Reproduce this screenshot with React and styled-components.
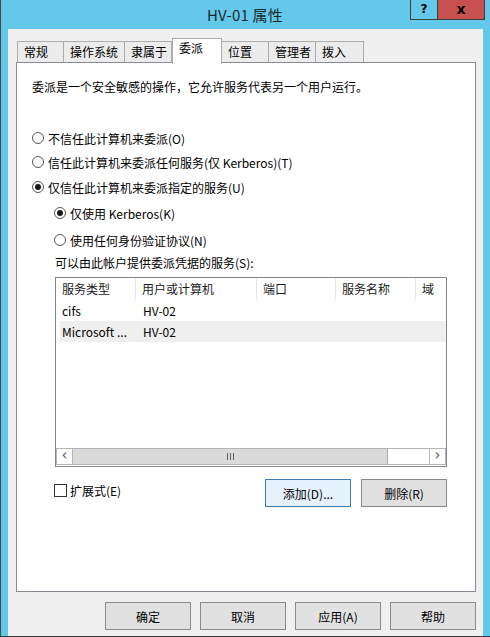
import React from "react";
import styled, { createGlobalStyle } from "styled-components";

const GlobalStyle = createGlobalStyle`
  html, body {
    margin: 0;
    padding: 0;
    background: #64c8ea;
  }
  body {
    font-family: "Noto Sans CJK SC", "Microsoft YaHei", sans-serif;
    font-size: 12px;
    color: #000;
  }
`;

const tabs = [
  { label: "常规", width: 47 },
  { label: "操作系统", width: 61 },
  { label: "隶属于", width: 47 },
  { label: "委派", width: 50, active: true },
  { label: "位置", width: 47 },
  { label: "管理者", width: 47 },
  { label: "拨入", width: 48 },
];

const columns = [
  { label: "服务类型", width: 80 },
  { label: "用户或计算机", width: 121 },
  { label: "端口", width: 79 },
  { label: "服务名称", width: 80 },
  { label: "域", width: 40 },
];

const rows = [
  { type: "cifs", host: "HV-02" },
  { type: "Microsoft ...", host: "HV-02", selected: true },
];

export default function App() {
  return (
    <>
      <GlobalStyle />
      <Window>
        <TitleBar>
          <span />
          <Title>HV-01 属性</Title>
          <Caption>
            <CaptionButton>?</CaptionButton>
            <CaptionButton close>x</CaptionButton>
          </Caption>
        </TitleBar>
        <Client>
          <TabStrip>
            {tabs.map((t) => (
              <Tab key={t.label} $w={t.width} $active={t.active}>
                {t.label}
              </Tab>
            ))}
          </TabStrip>
          <Panel>
            <Description>委派是一个安全敏感的操作，它允许服务代表另一个用户运行。</Description>

            <Option $top={31}>
              <Radio />
              不信任此计算机来委派(O)
            </Option>
            <Option $top={4}>
              <Radio />
              信任此计算机来委派任何服务(仅 Kerberos)(T)
            </Option>
            <Option $top={5}>
              <Radio $checked />
              仅信任此计算机来委派指定的服务(U)
            </Option>
            <Option $top={6} $indent={22}>
              <Radio $checked />
              仅使用 Kerberos(K)
            </Option>
            <Option $top={7} $indent={22}>
              <Radio />
              使用任何身份验证协议(N)
            </Option>

            <ListLabel>可以由此帐户提供委派凭据的服务(S):</ListLabel>

            <ListBox>
              <ListHeader>
                {columns.map((c) => (
                  <HeaderCell key={c.label} $w={c.width}>
                    {c.label}
                  </HeaderCell>
                ))}
              </ListHeader>
              <Rows>
                {rows.map((r) => (
                  <Row key={r.type} $selected={r.selected}>
                    <Cell $w={76}>{r.type}</Cell>
                    <Cell $w={121} $pad={7}>
                      {r.host}
                    </Cell>
                  </Row>
                ))}
              </Rows>
              <ScrollBar>
                <ScrollArrow>&lsaquo;</ScrollArrow>
                <Thumb>
                  <Grip />
                </Thumb>
                <Track />
                <ScrollArrow $right>&rsaquo;</ScrollArrow>
              </ScrollBar>
            </ListBox>

            <ActionRow>
              <CheckLabel>
                <CheckBox />
                扩展式(E)
              </CheckLabel>
              <ActionButtons>
                <Button $default>添加(D)...</Button>
                <Button>删除(R)</Button>
              </ActionButtons>
            </ActionRow>
          </Panel>
          <DialogButtons>
            <Button>确定</Button>
            <Button>取消</Button>
            <Button>应用(A)</Button>
            <Button>帮助</Button>
          </DialogButtons>
        </Client>
      </Window>
    </>
  );
}

const Window = styled.div`
  width: 490px;
  height: 637px;
  box-sizing: border-box;
  background: #64c8ea;
  border-left: 1px solid #4a4a4a;
  border-bottom: 1px solid #3a3a3a;
  padding: 0 7px 0 7px;
  display: flex;
  flex-direction: column;
`;

const TitleBar = styled.div`
  height: 29px;
  margin: 0 -7px 0 -8px;
  display: grid;
  grid-template-columns: 1fr auto 1fr;
  align-items: start;
`;

const Title = styled.div`
  font-size: 15px;
  line-height: 30px;
  color: #1b2b2b;
  letter-spacing: 0.2px;
`;

const Caption = styled.div`
  display: flex;
  justify-content: flex-end;
  padding-right: 5px;
`;

const CaptionButton = styled.div`
  width: ${(p) => (p.close ? 47 : 28)}px;
  height: 20px;
  box-sizing: border-box;
  border: 1px solid #3c3c3c;
  border-top: none;
  border-left: ${(p) => (p.close ? "none" : "1px solid #3c3c3c")};
  background: ${(p) => (p.close ? "#c75050" : "transparent")};
  display: flex;
  align-items: center;
  justify-content: center;
  font-family: "DejaVu Sans", sans-serif;
  font-weight: bold;
  font-size: ${(p) => (p.close ? 14 : 12)}px;
  line-height: 1;
  color: #000;
  padding-bottom: 2px;
`;

const Client = styled.div`
  flex: 1;
  background: #f0f0f0;
  display: flex;
  flex-direction: column;
  padding: 10px 7px 0 8px;
`;

const TabStrip = styled.div`
  display: flex;
  align-items: flex-end;
  height: 25px;
  margin-left: 1px;
  margin-bottom: -2px;
  position: relative;
  z-index: 1;
`;

const Tab = styled.div`
  width: ${(p) => p.$w}px;
  height: ${(p) => (p.$active ? 26 : 22)}px;
  box-sizing: border-box;
  border: 1px solid #acacac;
  border-bottom: ${(p) => (p.$active ? "none" : "1px solid #898c95")};
  border-left-width: ${(p) => (p.$active ? 1 : 0)}px;
  background: ${(p) => (p.$active ? "#fff" : "#ececec")};
  padding: ${(p) => (p.$active ? "1px 0 0 6px" : "2px 0 0 6px")};
  line-height: 16px;
  white-space: nowrap;
  margin-bottom: ${(p) => (p.$active ? 0 : 1)}px;
  &:first-child {
    border-left-width: 1px;
  }
`;

const Panel = styled.div`
  height: 530px;
  box-sizing: border-box;
  background: #fff;
  border: 1px solid #898c95;
  padding: 14px 28px 0 15px;
  display: flex;
  flex-direction: column;
`;

const Description = styled.div`
  line-height: 20px;
  white-space: nowrap;
`;

const Option = styled.div`
  display: flex;
  align-items: center;
  gap: 4px;
  height: 20px;
  margin-top: ${(p) => p.$top}px;
  margin-left: ${(p) => p.$indent || 0}px;
  white-space: nowrap;
`;

const Radio = styled.span`
  width: 12px;
  height: 12px;
  box-sizing: border-box;
  border-radius: 50%;
  border: 1px solid #555;
  background: #fff;
  flex: none;
  display: flex;
  align-items: center;
  justify-content: center;
  &::after {
    content: "";
    width: 6px;
    height: 6px;
    border-radius: 50%;
    background: #1a1a1a;
    display: ${(p) => (p.$checked ? "block" : "none")};
  }
`;

const ListLabel = styled.div`
  margin: 3px 0 0 23px;
  line-height: 20px;
`;

const ListBox = styled.div`
  margin: 4px 0 0 23px;
  height: 190px;
  box-sizing: border-box;
  border: 1px solid #828790;
  display: flex;
  flex-direction: column;
  overflow: hidden;
  padding-bottom: 1px;
`;

const ListHeader = styled.div`
  display: flex;
  height: 22px;
  flex: none;
`;

const HeaderCell = styled.div`
  width: ${(p) => p.$w}px;
  flex: none;
  box-sizing: border-box;
  border-right: 1px solid #e5e5e5;
  padding-left: 6px;
  line-height: 22px;
  white-space: nowrap;
  color: #1a1a1a;
`;

const Rows = styled.div`
  flex: 1;
  padding-left: 4px;
`;

const Row = styled.div`
  display: flex;
  height: 21px;
  line-height: 21px;
  background: ${(p) => (p.$selected ? "#efefef" : "transparent")};
`;

const Cell = styled.div`
  width: ${(p) => p.$w}px;
  flex: none;
  box-sizing: border-box;
  padding-left: ${(p) => p.$pad || 2}px;
  white-space: nowrap;
`;

const ScrollBar = styled.div`
  display: flex;
  height: 17px;
  flex: none;
  box-sizing: border-box;
  border: 1px solid #b4b4b4;
  background: #fff;
`;

const ScrollArrow = styled.div`
  width: 16px;
  flex: none;
  box-sizing: border-box;
  ${(p) => (p.$right ? "border-left" : "border-right")}: 1px solid #b4b4b4;
  display: flex;
  align-items: center;
  justify-content: center;
  font-family: "DejaVu Sans", sans-serif;
  font-size: 15px;
  line-height: 1;
  color: #606060;
  padding-bottom: 3px;
`;

const Thumb = styled.div`
  width: 315px;
  flex: none;
  box-sizing: border-box;
  background: #dadada;
  border-right: 1px solid #a8a8a8;
  display: flex;
  align-items: center;
  justify-content: center;
`;

const Grip = styled.span`
  width: 7px;
  height: 7px;
  background: linear-gradient(
    to right,
    #606060 0 1px,
    transparent 1px 3px,
    #606060 3px 4px,
    transparent 4px 6px,
    #606060 6px 7px
  );
`;

const Track = styled.div`
  flex: 1;
`;

const ActionRow = styled.div`
  margin: 12px 0 0 22px;
  display: flex;
  justify-content: space-between;
  align-items: flex-start;
`;

const CheckLabel = styled.div`
  display: flex;
  align-items: center;
  gap: 3px;
  height: 22px;
  margin-top: 0px;
`;

const CheckBox = styled.span`
  width: 13px;
  height: 13px;
  box-sizing: border-box;
  border: 1px solid #333;
  background: #fff;
`;

const ActionButtons = styled.div`
  display: flex;
  gap: 10px;
`;

const Button = styled.div`
  width: 86px;
  height: 28px;
  box-sizing: border-box;
  border: 1px solid ${(p) => (p.$default ? "#3c7fb1" : "#8a8a8a")};
  background: ${(p) => (p.$default ? "#e5f1fb" : "#e1e1e1")};
  display: flex;
  align-items: center;
  justify-content: center;
  white-space: nowrap;
`;

const DialogButtons = styled.div`
  display: flex;
  justify-content: flex-end;
  gap: 9px;
  margin-top: 10px;
`;
